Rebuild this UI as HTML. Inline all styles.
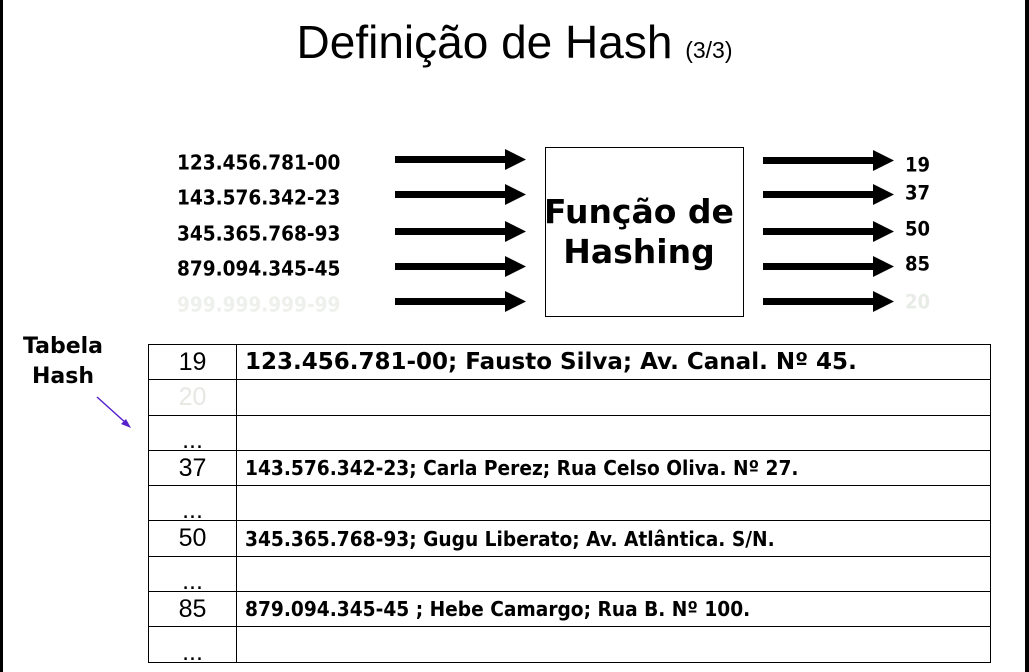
<!DOCTYPE html>
<html><head><meta charset="utf-8"><style>
*{margin:0;padding:0;box-sizing:border-box}
body{width:1029px;height:672px;background:#fff;position:relative;overflow:hidden;font-family:"Liberation Sans",sans-serif;color:#000}
.a{position:absolute;white-space:nowrap}
.lb{left:0;top:0;width:3px;height:672px;background:#000}
.rb{right:0;top:0;width:4px;height:672px;background:#000}
.title{left:0;width:1029px;text-align:center;top:15px;font-size:46px}
.title small{font-size:23px}
.num{font-family:"DejaVu Sans",sans-serif;font-weight:bold;font-size:18.5px;left:177px;transform:scaleY(1.12);transform-origin:left center}
.rn{font-family:"DejaVu Sans",sans-serif;font-weight:bold;font-size:18px;left:905px;transform:scaleY(1.1)}
.box{left:545px;top:147px;width:199px;height:170px;border:1.5px solid #000}
.fh{left:539px;width:200px;text-align:center;font-family:"DejaVu Sans",sans-serif;font-weight:bold;font-size:33px;line-height:40px;top:192px}
table{position:absolute;left:148px;top:344px;border-collapse:collapse}
td{border:1.5px solid #000;height:35.3px;padding:0}
td.k{width:88px;text-align:center;font-size:25px;font-weight:300}
td.v{width:754px;padding-left:8px;font-family:"DejaVu Sans",sans-serif;font-weight:bold;font-size:17.5px}
td.v span{display:inline-block;font-size:20px;transform:scaleX(0.93);transform-origin:left center}
td.d{vertical-align:bottom;line-height:20px}
</style></head><body>
<div class="a lb"></div><div class="a rb"></div>
<div class="a title">Definição de Hash <small>(3/3)</small></div>
<div class="a num" style="top:153px">123.456.781-00</div>
<div class="a num" style="top:188px">143.576.342-23</div>
<div class="a num" style="top:224px">345.365.768-93</div>
<div class="a num" style="top:259px">879.094.345-45</div>
<div class="a num" style="top:295px;color:#eef0ec">999.999.999-99</div>
<svg class="a" style="left:0;top:0" width="1029" height="672">
<g fill="#000">
<g id="ar"><rect x="395" y="156" width="112" height="7"/><polygon points="505,149 526,159.5 505,170"/></g>
<use href="#ar" y="35"/><use href="#ar" y="72"/><use href="#ar" y="107"/><use href="#ar" y="142"/>
<g id="br"><rect x="763" y="157" width="112" height="7"/><polygon points="873,150 894,160.5 873,171"/></g>
<use href="#br" y="34"/><use href="#br" y="71"/><use href="#br" y="106"/><use href="#br" y="141"/>
</g>
<line x1="97" y1="397" x2="127" y2="424" stroke="#5522cc" stroke-width="1.5"/>
<polygon points="131,428 121,424 126,419" fill="#5522cc"/>
</svg>
<div class="a box"></div>
<div class="a fh">Função de<br>Hashing</div>
<div class="a rn" style="top:155px">19</div>
<div class="a rn" style="top:183px">37</div>
<div class="a rn" style="top:219px">50</div>
<div class="a rn" style="top:254px">85</div>
<div class="a rn" style="top:292px;color:#e8ece6">20</div>
<div class="a" style="left:16px;top:332px;width:94px;text-align:center;font-family:'DejaVu Sans',sans-serif;font-weight:bold;font-size:22px;line-height:30px">Tabela<br>Hash</div>
<table>
<tr><td class="k">19</td><td class="v" style="font-size:23px">123.456.781-00; Fausto Silva; Av. Canal. Nº 45.</td></tr>
<tr><td class="k" style="color:#e6e8e4">20</td><td class="v"></td></tr>
<tr><td class="k d">...</td><td class="v"></td></tr>
<tr><td class="k">37</td><td class="v"><span>143.576.342-23; Carla Perez; Rua Celso Oliva. Nº 27.</span></td></tr>
<tr><td class="k d">...</td><td class="v"></td></tr>
<tr><td class="k">50</td><td class="v"><span>345.365.768-93; Gugu Liberato; Av. Atlântica. S/N.</span></td></tr>
<tr><td class="k d">...</td><td class="v"></td></tr>
<tr><td class="k">85</td><td class="v"><span>879.094.345-45 ; Hebe Camargo; Rua B. Nº 100.</span></td></tr>
<tr><td class="k d">...</td><td class="v"></td></tr>
</table>
</body></html>
